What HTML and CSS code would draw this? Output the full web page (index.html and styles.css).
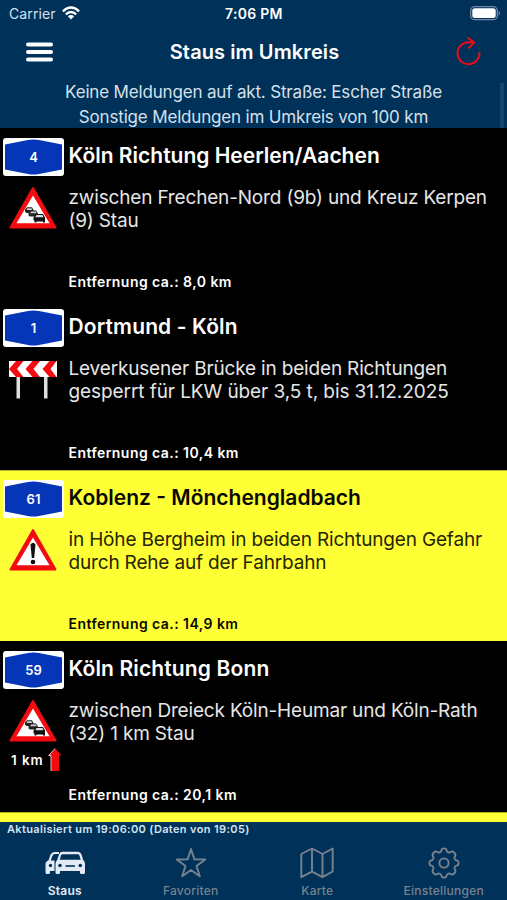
FILE: index.html
```html
<!DOCTYPE html>
<html lang="de">
<head>
<meta charset="utf-8">
<title>Staus im Umkreis</title>
<link rel="stylesheet" href="styles.css">
</head>
<body>
<svg width="0" height="0" class="defs">
  <symbol id="shield" viewBox="0 0 61 38">
    <rect width="61" height="38" rx="3" fill="#fff"/>
    <path d="M2 6.500L25 2Q30.500 .8 36 2L59 6.500V31.500L36 36Q30.500 37.200 25 36L2 31.500Z" fill="#0636b8"/>
  </symbol>
  <symbol id="triangle" viewBox="0 0 48 44">
    <path d="M24 2L46.500 41.500H1.500Z" fill="#f20c10" stroke="#f20c10" stroke-width="2" stroke-linejoin="round"/>
    <path d="M24 9.500L40.500 37.300H7.500Z" fill="#fff"/>
  </symbol>
  <symbol id="jam" viewBox="0 0 48 44">
    <use href="#triangle"/>
    <path d="M16 23.500L18 21.300H23L24.500 24V27H17.500L16 25.500Z" fill="#222"/>
    <path d="M18.300 22.300H22.500L23.200 24H17.600Z" fill="#ccc"/>
    <path d="M19.500 27L21.700 24.500H27L29 27.500V30.500H21L19.500 29.500Z" fill="#222"/>
    <path d="M22 25.500H26.800L27.700 27.300H21.200Z" fill="#ccc"/>
    <path d="M24.500 31.500L27 28H34L36 31.500V36.500H34V35.500H27.500V36.500H25.500V34.500H24.500Z" fill="#111"/>
    <path d="M27.500 29H33.500L34.500 31.300H26.300Z" fill="#ddd"/>
  </symbol>
</svg>
<div class="phone">
  <div class="status">
    <span class="carrier">Carrier</span>
    <svg class="wifi" viewBox="0 0 18 14" width="18" height="14"><g fill="none" stroke="#fff" stroke-width="2.300"><path d="M.9 5.300Q9-2.300 17.100 5.300"/><path d="M3.800 8.400Q9 3.700 14.200 8.400"/></g><path d="M5.800 10.300Q9 7.600 12.200 10.300L9 13.500Z" fill="#fff"/></svg>
    <span class="time">7:06 PM</span>
    <svg class="battery" viewBox="0 0 31 15" width="31" height="15"><rect x=".7" y=".7" width="26.600" height="13" rx="4" fill="none" stroke="#7189a4" stroke-width="1.300"/><rect x="2.300" y="2.300" width="23.400" height="9.800" rx="2.500" fill="#fff"/><path d="M28.700 4.800Q31.300 7.200 28.700 9.600Z" fill="#7189a4"/></svg>
  </div>
  <div class="nav">
    <svg class="menu" viewBox="0 0 27 20" width="27" height="20"><path d="M2 2.500H25M2 10H25M2 17.500H25" stroke="#fff" stroke-width="4" stroke-linecap="round"/></svg>
    <h1 class="title">Staus im Umkreis</h1>
    <svg class="reload" viewBox="0 0 26 30" width="26" height="30"><path d="M23.500 16.200A11 11 0 1 1 12.500 6.200H18M11.500 1.500L18 6.400L12.500 12.500" fill="none" stroke="#ef0a18" stroke-width="1.900"/></svg>
  </div>
  <div class="banner">
    <p class="line">Keine Meldungen auf akt. Straße: Escher Straße</p>
    <p class="line">Sonstige Meldungen im Umkreis von 100 km</p>
    <i class="scroll"></i>
  </div>
  <main class="list">
    <article class="row">
      <div class="signs">
        <div class="road"><svg width="61" height="38"><use href="#shield"/></svg><b>4</b></div>
        <svg class="sign" width="48" height="44"><use href="#jam"/></svg>
      </div>
      <div class="info">
        <h2 class="head">Köln Richtung Heerlen/Aachen</h2>
        <p class="desc">zwischen Frechen-Nord (9b) und Kreuz Kerpen<br>(9) Stau</p>
        <p class="dist">Entfernung ca.: 8,0 km</p>
      </div>
    </article>
    <article class="row">
      <div class="signs">
        <div class="road"><svg width="61" height="38"><use href="#shield"/></svg><b>1</b></div>
        <svg class="sign" viewBox="0 0 48 44" width="48" height="44"><path d="M7.500 18H11V41.500H7.500ZM35 18H38.500V41.500H35Z" fill="#dedede"/><rect y="4" width="48" height="16" fill="#fff"/><path d="M7 4H14.500L8 12L14.500 20H7L0 12ZM23.500 4H31L24.500 12L31 20H23.500L16.500 12ZM40.500 4H47.500L41.500 12L47.500 20H40.500L33.500 12Z" fill="#f20c10"/></svg>
      </div>
      <div class="info">
        <h2 class="head wide">Dortmund - Köln</h2>
        <p class="desc">Leverkusener Brücke in beiden Richtungen<br><span class="digits">gesperrt für LKW über 3,5 t, bis 31.12.2025</span></p>
        <p class="dist">Entfernung ca.: 10,4 km</p>
      </div>
    </article>
    <article class="row alert">
      <div class="signs">
        <div class="road"><svg width="61" height="38"><use href="#shield"/></svg><b>61</b></div>
        <svg class="sign" viewBox="0 0 48 44" width="48" height="44"><use href="#triangle"/><path d="M21.500 16.500Q24 13 26.500 16.500L25.200 30H22.800Z" fill="#111"/><circle cx="24" cy="34" r="2.300" fill="#111"/></svg>
      </div>
      <div class="info">
        <h2 class="head">Koblenz - Mönchengladbach</h2>
        <p class="desc">in Höhe Bergheim in beiden Richtungen Gefahr<br>durch Rehe auf der Fahrbahn</p>
        <p class="dist">Entfernung ca.: 14,9 km</p>
      </div>
    </article>
    <article class="row">
      <div class="signs">
        <div class="road"><svg width="61" height="38"><use href="#shield"/></svg><b>59</b></div>
        <svg class="sign" width="48" height="44"><use href="#jam"/></svg>
        <div class="length"><span>1 km</span><svg viewBox="0 0 14 24" width="14" height="24"><path d="M7 .5L.7 7.500H3V23H11V7.500H13.500Z" fill="#f20c10"/><path d="M7 .5L.7 7.500H3V23" fill="none" stroke="#eab8b8" stroke-width="1"/></svg></div>
      </div>
      <div class="info">
        <h2 class="head wide">Köln Richtung Bonn</h2>
        <p class="desc">zwischen Dreieck Köln-Heumar und Köln-Rath<br>(32) 1 km Stau</p>
        <p class="dist">Entfernung ca.: 20,1 km</p>
      </div>
    </article>
    <article class="row alert"></article>
  </main>
  <p class="updated">Aktualisiert um 19:06:00 (Daten von 19:05)</p>
  <nav class="tabs">
    <div class="tab active">
      <svg viewBox="0 0 40 24" width="40" height="24"><path d="M14 2H10Q7.200 2 6.200 4.800L4.300 10.500" fill="none" stroke="#e2ebf5" stroke-width="2.200"/><path d="M3.500 9.500H9.500V20H5V21.500Q5 23 3.500 23H2Q.5 23 .5 21.500V13Q.5 10.500 3.500 9.500Z" fill="#e2ebf5"/><circle cx="5.500" cy="14.500" r="1.700" fill="#003159"/><path d="M17 .7H33Q35.500.7 36.500 3.500L38.200 9Q40 10.500 40 13V21.500Q40 23 38.500 23H36.500Q35 23 35 21.500V20H15V21.500Q15 23 13.500 23H12Q10.500 23 10.500 21.500V13Q10.500 10.500 12.200 9L14 3.500Q15 .7 17 .7ZM17.500 3.200Q16.500 3.200 16 4.500L14.700 8.700H35.700L34.400 4.500Q34 3.200 33 3.200Z" fill="#e2ebf5" fill-rule="evenodd"/><path d="M20.500 15H30" stroke="#003159" stroke-width="1.600"/><circle cx="15" cy="14.500" r="1.800" fill="#003159"/><circle cx="35.300" cy="14.500" r="1.800" fill="#003159"/></svg>
      <span>Staus</span>
    </div>
    <div class="tab">
      <svg viewBox="0 0 32 32" width="32" height="32"><path d="M16 2L19.400 12.400L30.300 12.500L21.500 18.900L24.800 29.300L16 22.900L7.200 29.300L10.500 18.900L1.700 12.500L12.600 12.400Z" fill="none" stroke="#78828d" stroke-width="1.900" stroke-linejoin="round"/></svg>
      <span>Favoriten</span>
    </div>
    <div class="tab">
      <svg viewBox="0 0 34 32" width="34" height="32"><path d="M1.300 7L12 1.500L22.500 7L32.700 1.500V24.500L22.500 30.200L12 24.700L1.300 30.200ZM12 1.500V24.700M22.500 7V30.200" fill="none" stroke="#78828d" stroke-width="1.900" stroke-linejoin="round"/></svg>
      <span>Karte</span>
    </div>
    <div class="tab">
      <svg viewBox="-16 -16 32 32" width="32" height="32"><path d="M-4-10.800Q-2.800-11.200-2.600-12.600Q-2.300-14.600 0-14.600Q2.300-14.600 2.600-12.600Q2.800-11.200 4-10.800Q5.200-10 6.400-10.900Q8.500-12.200 10.300-10.300Q12.200-8.500 10.900-6.400Q10-5.200 10.800-4Q11.200-2.800 12.600-2.600Q14.600-2.300 14.600 0Q14.600 2.300 12.600 2.600Q11.200 2.800 10.800 4Q10 5.200 10.900 6.400Q12.200 8.500 10.300 10.300Q8.500 12.200 6.400 10.900Q5.200 10 4 10.800Q2.800 11.200 2.600 12.600Q2.300 14.600 0 14.600Q-2.300 14.600-2.600 12.600Q-2.800 11.200-4 10.800Q-5.200 10-6.400 10.900Q-8.500 12.200-10.300 10.300Q-12.200 8.500-10.900 6.400Q-10 5.200-10.800 4Q-11.200 2.800-12.600 2.600Q-14.600 2.300-14.600 0Q-14.600-2.300-12.600-2.600Q-11.200-2.800-10.800-4Q-10-5.200-10.900-6.400Q-12.200-8.500-10.300-10.300Q-8.500-12.200-6.400-10.900Q-5.200-10-4-10.800Z" fill="none" stroke="#78828d" stroke-width="1.900"/><circle r="4.600" fill="none" stroke="#78828d" stroke-width="1.900"/></svg>
      <span>Einstellungen</span>
    </div>
  </nav>
</div>
</body>
</html>
```
FILE: styles.css
```css
* { box-sizing: border-box; margin: 0; padding: 0; }
body { background: #003159; font-family: Inter, "Liberation Sans", sans-serif; color: #fff; }
svg { display: block; flex: none; }
.defs { position: absolute; }
.phone { width: 507px; height: 900px; overflow: hidden; display: flex; flex-direction: column; }
.status { height: 28px; display: grid; grid-template-columns: 53px 163px 60px 1fr 31px; padding: 0 6px 0 9px; font-size: 14px; line-height: 28px; }
.carrier { letter-spacing: 0.1px; color: #d5e0eb; white-space: nowrap; }
.wifi { margin-top: 6px; }
.time { font-weight: 600; letter-spacing: 0.3px; white-space: nowrap; }
.battery { margin-top: 6px; grid-column: 5; }
.nav { height: 52px; display: grid; grid-template-columns: 27px 1fr 26px; align-items: start; padding: 0 25px 0 26px; }
.menu { margin-top: 14px; }
.reload { margin-top: 8px; }
.title { font-size: 20px; font-weight: 600; line-height: 49px; letter-spacing: 0.1px; text-align: center; white-space: nowrap; }
.banner { height: 48px; position: relative; text-align: center; font-size: 17px; letter-spacing: -0.17px; color: #d5e0eb; }
.line { line-height: 24.500px; white-space: nowrap; }
.scroll { position: absolute; right: 3px; top: 3px; width: 4px; height: 45px; background: #194466; }
.list { height: 694px; background: #000; overflow: hidden; }
.row { height: 171px; display: flex; }
.alert { background: #ffff35; color: #080800; border-top: 1px solid #b5b520; }
.signs { width: 68.500px; padding: 10px 0 0 3px; }
.alert .signs { padding-top: 9px; }
.road { display: grid; width: 61px; height: 38px; }
.road svg, .road b { grid-area: 1 / 1; }
.road b { font-size: 13px; line-height: 38px; font-weight: 600; text-align: center; color: #fff; }
.sign { margin: 10px 0 0 6px; }
.length { display: flex; height: 24px; margin: 4px 0 0 8px; font-size: 13.500px; font-weight: 600; letter-spacing: 0.9px; line-height: 27px; gap: 4px; white-space: nowrap; }
.length svg { margin-top: 1px; }
.info { flex: 1; white-space: nowrap; }
.head { font-size: 21px; font-weight: 600; line-height: 26px; margin-top: 15px; }
.wide { letter-spacing: 0.13px; }
.desc { font-size: 19px; line-height: 23px; letter-spacing: -0.17px; margin-top: 17px; color: #e6e6e6; }
.digits { letter-spacing: -0.08px; }
.alert .desc { color: #252500; }
.dist { font-size: 14px; font-weight: 600; line-height: 18px; letter-spacing: 0.45px; margin-top: 41px; }
.alert .head { margin-top: 14px; }
.updated { height: 17px; padding-left: 7px; font-size: 11px; font-weight: 600; line-height: 15px; letter-spacing: 0.36px; color: #d5e3f0; }
.tabs { height: 61px; display: grid; grid-template-columns: repeat(4, 1fr); padding-left: 1px; color: #78828d; }
.tab { display: flex; flex-direction: column; align-items: center; padding-top: 8px; font-size: 12px; font-weight: 500; letter-spacing: 0.25px; }
.tab span { line-height: 14px; margin-top: 5px; }
.tab.active { color: #e2ebf5; font-weight: 600; padding: 12px 0 0 1px; }
.tab.active span { margin-top: 9px; }
```
